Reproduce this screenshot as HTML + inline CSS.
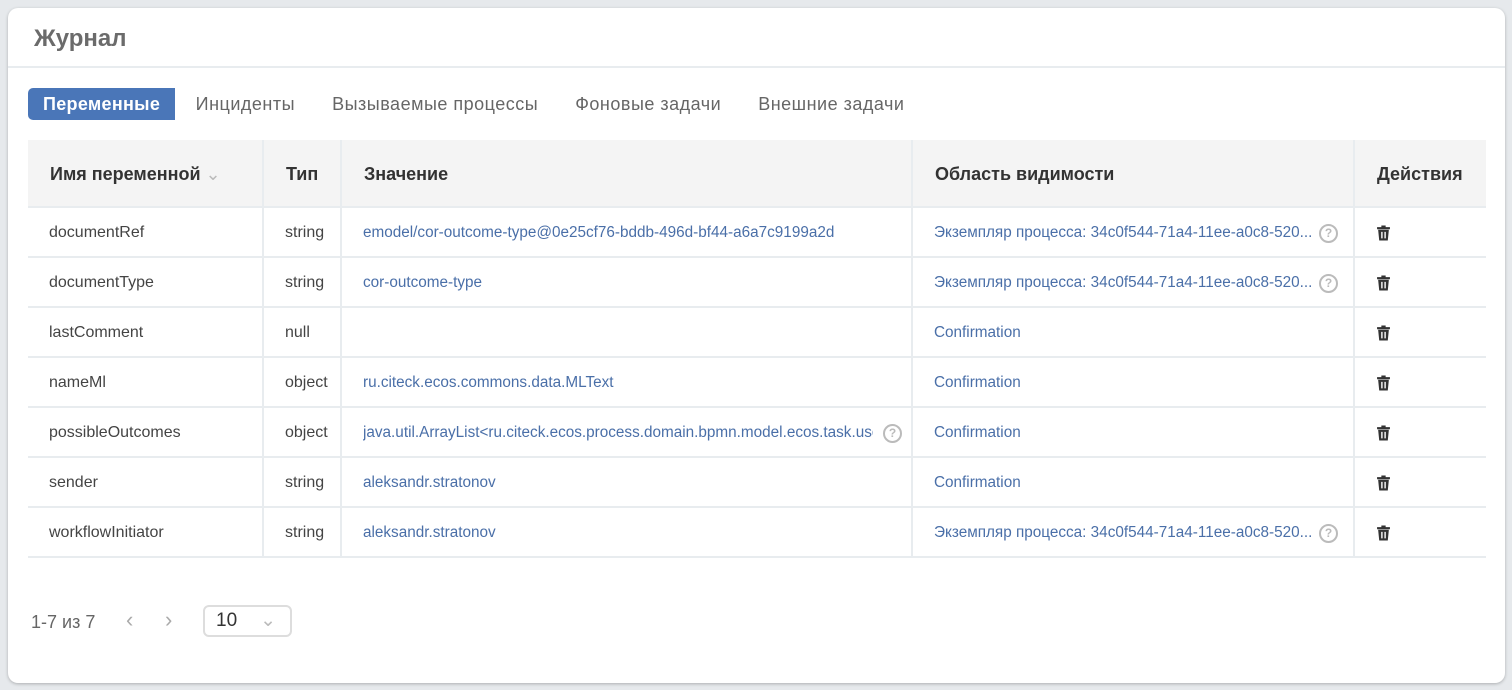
<!DOCTYPE html>
<html><head><meta charset="utf-8"><style>
body{margin:0;width:1512px;height:690px;background:#e6e9ec;font-family:"Liberation Sans","DejaVu Sans",sans-serif;overflow:hidden;position:relative}
.card{position:absolute;left:8px;top:8px;width:1497px;height:675px;background:#fff;border-radius:10px;box-shadow:0 1px 3px rgba(0,0,0,.25)}
.title{position:absolute;left:26px;top:17px;font-size:24px;font-weight:bold;color:#6b6b6b}
.hl{position:absolute;left:0;right:0;top:58px;height:2px;background:#e8ecef}
.tabs{position:absolute;left:20px;top:80px;height:32px;display:flex;font-size:18px;color:#666;letter-spacing:.5px}
.tab{padding:0 18.5px;line-height:32px}
.tab.a{background:#4a76b8;color:#fff;font-weight:bold;border-radius:5px 0 0 5px;padding:0 15px;letter-spacing:.3px;margin-right:2px}
table{position:absolute;left:20px;top:132px;width:1458px;border-collapse:collapse;table-layout:fixed;font-size:16px;color:#444}
th{background:#f4f4f4;height:63px;text-align:left;font-size:18px;color:#333;padding:3px 22px 0;border-right:2px solid #e8ecef}
td{height:46px;border-top:2px solid #e8ecef;border-right:2px solid #e8ecef;padding:2px 21px 0;white-space:nowrap;overflow:hidden}
tr:last-child td{border-bottom:2px solid #e8ecef}
th:last-child,td:last-child{border-right:none}
.l{color:#4a6fa8;font-size:15.3px}
.q{float:right;width:15px;height:15px;border:2px solid #bbb;border-radius:50%;color:#bbb;font-size:12px;line-height:15px;text-align:center;font-weight:bold;margin-right:-6px}
.pg{position:absolute;left:23px;top:604px;font-size:18px;color:#666}
.ch{position:absolute;top:606px;font-size:22px;color:#aaa}
.sel{position:absolute;left:195px;top:597px;width:74px;height:28px;border:2px solid #ddd;border-radius:6px;font-size:19px;color:#333;line-height:28px;padding-left:11px}
svg{vertical-align:middle}
</style></head><body>
<div class="card">
<div class="title">Журнал</div><div class="hl"></div>
<div class="tabs"><div class="tab a">Переменные</div><div class="tab">Инциденты</div><div class="tab">Вызываемые процессы</div><div class="tab">Фоновые задачи</div><div class="tab">Внешние задачи</div></div>
<table>
<colgroup><col style="width:235px"><col style="width:78px"><col style="width:571px"><col style="width:442px"><col></colgroup>
<tr><th>Имя переменной <span style="color:#bbb;font-weight:normal">&#8964;</span></th><th>Тип</th><th>Значение</th><th>Область видимости</th><th>Действия</th></tr>
<tr><td>documentRef</td><td>string</td><td class="l">emodel/cor-outcome-type@0e25cf76-bddb-496d-bf44-a6a7c9199a2d</td><td class="l"><span class="q">?</span>Экземпляр процесса: 34c0f544-71a4-11ee-a0c8-520...</td><td><svg width="15" height="18" viewBox="0 0 14 16"><path d="M1 2.5h12v2H1zM5 1h4v1.5H5zM2 5h10l-1 10H3z" fill="#333"/><path d="M5.5 7v6M8.5 7v6" stroke="#fff" stroke-width="1.3"/></svg></td></tr>
<tr><td>documentType</td><td>string</td><td class="l">cor-outcome-type</td><td class="l"><span class="q">?</span>Экземпляр процесса: 34c0f544-71a4-11ee-a0c8-520...</td><td><svg width="15" height="18" viewBox="0 0 14 16"><path d="M1 2.5h12v2H1zM5 1h4v1.5H5zM2 5h10l-1 10H3z" fill="#333"/><path d="M5.5 7v6M8.5 7v6" stroke="#fff" stroke-width="1.3"/></svg></td></tr>
<tr><td>lastComment</td><td>null</td><td></td><td class="l">Confirmation</td><td><svg width="15" height="18" viewBox="0 0 14 16"><path d="M1 2.5h12v2H1zM5 1h4v1.5H5zM2 5h10l-1 10H3z" fill="#333"/><path d="M5.5 7v6M8.5 7v6" stroke="#fff" stroke-width="1.3"/></svg></td></tr>
<tr><td>nameMl</td><td>object</td><td class="l">ru.citeck.ecos.commons.data.MLText</td><td class="l">Confirmation</td><td><svg width="15" height="18" viewBox="0 0 14 16"><path d="M1 2.5h12v2H1zM5 1h4v1.5H5zM2 5h10l-1 10H3z" fill="#333"/><path d="M5.5 7v6M8.5 7v6" stroke="#fff" stroke-width="1.3"/></svg></td></tr>
<tr><td>possibleOutcomes</td><td>object</td><td class="l"><span class="q" style="margin-right:-12px">?</span><div style="overflow:hidden;width:510px">java.util.ArrayList&lt;ru.citeck.ecos.process.domain.bpmn.model.ecos.task.user</div></td><td class="l">Confirmation</td><td><svg width="15" height="18" viewBox="0 0 14 16"><path d="M1 2.5h12v2H1zM5 1h4v1.5H5zM2 5h10l-1 10H3z" fill="#333"/><path d="M5.5 7v6M8.5 7v6" stroke="#fff" stroke-width="1.3"/></svg></td></tr>
<tr><td>sender</td><td>string</td><td class="l">aleksandr.stratonov</td><td class="l">Confirmation</td><td><svg width="15" height="18" viewBox="0 0 14 16"><path d="M1 2.5h12v2H1zM5 1h4v1.5H5zM2 5h10l-1 10H3z" fill="#333"/><path d="M5.5 7v6M8.5 7v6" stroke="#fff" stroke-width="1.3"/></svg></td></tr>
<tr><td>workflowInitiator</td><td>string</td><td class="l">aleksandr.stratonov</td><td class="l"><span class="q">?</span>Экземпляр процесса: 34c0f544-71a4-11ee-a0c8-520...</td><td><svg width="15" height="18" viewBox="0 0 14 16"><path d="M1 2.5h12v2H1zM5 1h4v1.5H5zM2 5h10l-1 10H3z" fill="#333"/><path d="M5.5 7v6M8.5 7v6" stroke="#fff" stroke-width="1.3"/></svg></td></tr>
</table>
<div class="pg">1-7 из 7</div>
<div class="ch" style="left:118px;top:599px">‹</div><div class="ch" style="left:157px;top:599px">›</div>
<div class="sel">10 <span style="float:right;margin-right:14px;color:#bbb">&#8964;</span></div>
</div>
</body></html>
